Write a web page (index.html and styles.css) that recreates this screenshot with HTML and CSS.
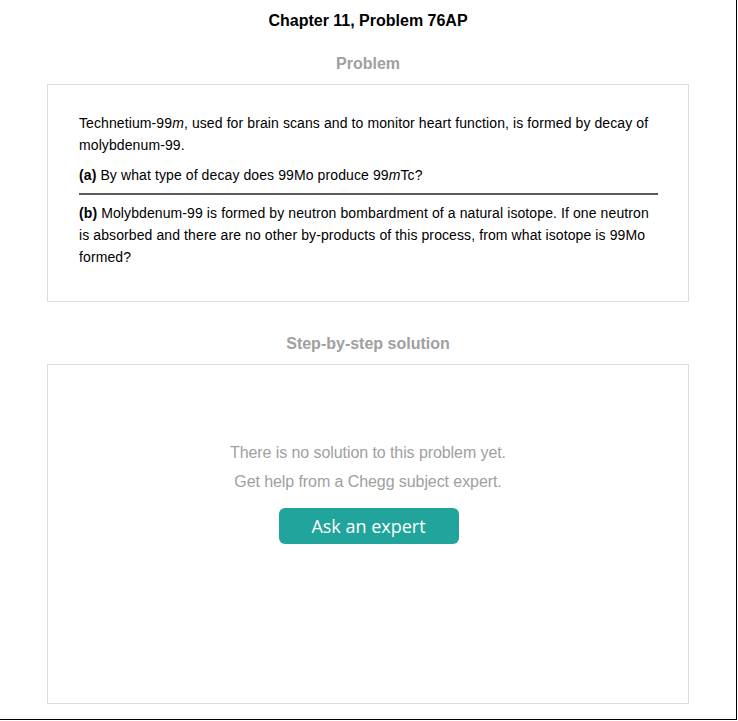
FILE: index.html
```html
<!DOCTYPE html>
<html lang="en">
<head>
<meta charset="utf-8">
<title>Chapter 11, Problem 76AP</title>
<link rel="stylesheet" href="styles.css">
</head>
<body>
<div class="page">
  <h1 class="title">Chapter 11, Problem 76AP</h1>
  <h2 class="section-heading">Problem</h2>
  <div class="card problem-card">
    <p class="para">Technetium-99<i>m</i>, used for brain scans and to monitor heart function, is formed by decay of molybdenum-99.</p>
    <p class="para part"><b>(a)</b> By what type of decay does 99Mo produce 99<i>m</i>Tc?</p>
    <hr class="rule">
    <p class="para"><b>(b)</b> Molybdenum-99 is formed by neutron bombardment of a natural isotope. If one neutron is absorbed and there are no other by-products of this process, from what isotope is 99Mo formed?</p>
  </div>
  <h2 class="section-heading">Step-by-step solution</h2>
  <div class="card solution-card">
    <p class="empty-msg">There is no solution to this problem yet.</p>
    <p class="empty-msg">Get help from a Chegg subject expert.</p>
    <button class="ask-btn" type="button">Ask an expert</button>
  </div>
</div>
</body>
</html>
```

FILE: styles.css
```css
html, body {
  margin: 0;
  padding: 0;
  background: #fff;
}

body {
  font-family: "Liberation Sans", Arial, sans-serif;
  color: #000;
}

.page {
  width: 736px;
  height: 719px;
  border-right: 1px solid #000;
  border-bottom: 1px solid #000;
  display: flex;
  flex-direction: column;
  align-items: center;
  overflow: hidden;
}

.title {
  margin: 11px 0 0;
  font-size: 16px;
  line-height: 20px;
  font-weight: bold;
  color: #000;
}

.section-heading {
  margin: 23px 0 10px;
  font-size: 16px;
  line-height: 20px;
  font-weight: bold;
  color: #a0a0a0;
}

.card {
  box-sizing: border-box;
  width: 642px;
  border: 1px solid #dddddd;
  background: #fff;
}

.problem-card {
  height: 218px;
  padding: 27px 30px 0 31px;
  margin-bottom: 9px;
}

.para {
  margin: 0;
  font-size: 14px;
  line-height: 22px;
  letter-spacing: 0.1px;
}

.part {
  margin-top: 8px;
}

.rule {
  margin: 7px 0 7px;
  border: 0;
  height: 2px;
  background: #5a5a5a;
}

.solution-card {
  height: 340px;
  padding-top: 73px;
  display: flex;
  flex-direction: column;
  align-items: center;
}

.empty-msg {
  margin: 0;
  font-size: 16px;
  line-height: 29px;
  letter-spacing: -0.08px;
  color: #a0a0a0;
}

.ask-btn {
  margin: 12px 0 0 1px;
  width: 180px;
  height: 36px;
  border: 0;
  border-radius: 6px;
  background: #21a49b;
  color: #fff;
  font-family: "Open Sans", sans-serif;
  font-size: 18px;
  padding: 0;
  cursor: pointer;
}
```
